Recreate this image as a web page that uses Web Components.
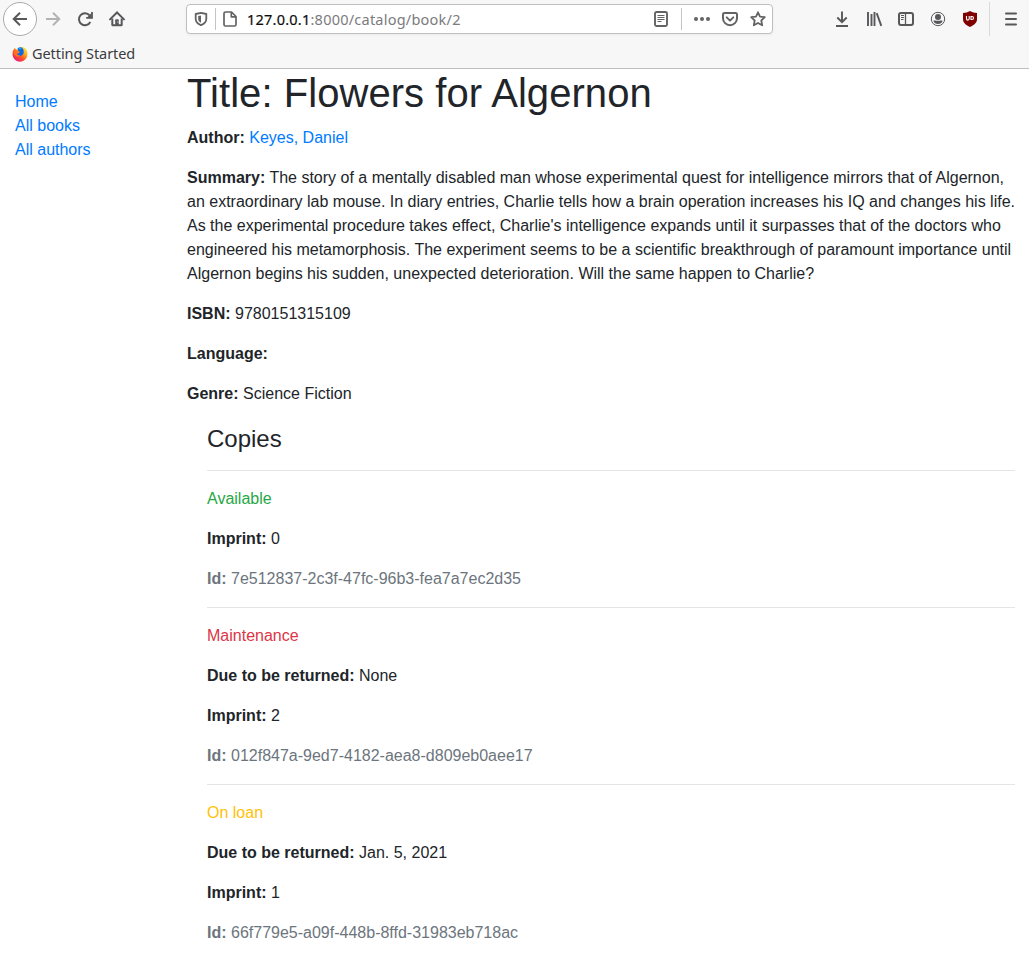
<!DOCTYPE html>
<html lang="en">
<head>
<meta charset="utf-8">
<title>Flowers for Algernon</title>
<style>
html,body{margin:0;height:100%;overflow:hidden;background:#fff}
body{font:16px/24px "Liberation Sans",Arial,sans-serif;color:#212529}
</style>
</head>
<body>
<browser-bar></browser-bar>
<library-page></library-page>
<script>
const ICONS = {
  back:'<path d="M15 8H2M8 1.7 1.7 8 8 14.3"/>',
  forward:'<path d="M1 8h13M8 1.7 14.3 8 8 14.3"/>',
  reload:'<path d="M13.3 11A6 6 0 1 1 12.6 4.4"/><path d="M15 1v5.9H9.2" stroke-width="1.8"/><path d="M14.5 2v4.5H10z" fill="currentColor" stroke="none"/>',
  home:'<path d="M1 8.4 8 1.5l7 6.9" stroke-linecap="round"/><path d="M3.3 7.5v6.2q0 .5.5.5h8.4q.5 0 .5-.5V7.5"/><path d="M6.2 14V9.2q0-.9.9-.9h1.8q.9 0 .9.9V14z" fill="currentColor" stroke="none"/><path d="M8.4 11h1" stroke="#f7f7f8" stroke-width="1"/>',
  shield:'<path d="M8 1.9 13.300 3v5c0 3.200-2.300 5-5.300 6.200C5 13 2.700 11.200 2.700 8V3z" stroke-width="1.800" stroke-linejoin="round"/><path d="M8 4.500 5.200 5v3c0 1.900 1 2.900 2.800 3.800z" fill="currentColor" stroke="none"/>',
  page:'<path d="M9.500 1H3.500Q2 1 2 2.500v11Q2 15 3.500 15h9q1.500 0 1.500-1.500V5.500zM9.300 1.500v4.300h4.300" stroke-width="1.700" stroke-linejoin="round"/>',
  reader:'<rect x="2" y="1" width="12" height="14" rx="1.500" stroke-width="1.900"/><path d="M4.500 4.500h7M4.500 6.500h7M4.500 8.500h7M4.500 10.500h4" stroke-width="1"/>',
  dots:'<g fill="currentColor" stroke="none"><circle cx="2" cy="8" r="2"/><circle cx="8" cy="8" r="2"/><circle cx="14" cy="8" r="2"/></g>',
  pocket:'<path d="M2.500 2h11q1.500 0 1.500 1.500v3.700a7 7 0 0 1-14 0V3.500Q1 2 2.500 2z"/><path d="m4.700 6.400 3.300 3.200 3.300-3.200" stroke-linecap="round" stroke-linejoin="round"/>',
  star:'<path d="m8 1.300 2 4.300 4.800.6-3.500 3.300.9 4.800L8 12l-4.200 2.300.9-4.800L1.200 6.200 6 5.600z" stroke-width="1.800" stroke-linejoin="round"/>',
  download:'<path d="M8 .5V11M3.300 6.500 8 11.200l4.700-4.700M2 15h12" stroke-linecap="butt" stroke-width="1.900"/>',
  library:'<path d="M2 1v14M5.500 3v12M8.500 1v14" stroke-width="1.900"/><path d="m10.700 2.200 4.600 12.600" stroke-width="1.900"/>',
  sidebar:'<rect x="1" y="2" width="14" height="12" rx="2"/><path d="M7.500 2v12" stroke-width="1.300"/><path d="M3 4.500h3M3 6.500h3M3 8.500h2.500" stroke-width="1"/>',
  account:'<circle cx="8" cy="8" r="6.700" stroke-width="1"/><g fill="currentColor" stroke="none"><circle cx="8" cy="6" r="3"/><path d="M3.300 9.800c1.500-.7 2.500 0 4.700 0s3.200-.7 4.700 0a5 5 0 0 1-9.400 0z"/></g>',
  ublock:'<path d="M8 0q3 2 7 2v6c0 4-3 6-7 8-4-2-7-4-7-8V2q4 0 7-2z" fill="#800000" stroke="none"/><path d="M4.500 5v2.800q0 1.300 1.300 1.300T7.200 7.800V5M9 5.500v3h1a1.500 1.500 0 0 0 0-3z" stroke="#fff" stroke-width="1.100"/>',
  menu:'<path d="M3 2.500h10M3 8h10M3 13.500h10" stroke-linecap="round"/>',
  firefox:'<defs><linearGradient id="flame" x1="1" y1="0" x2=".2" y2="1"><stop stop-color="#fff44f"/><stop offset=".35" stop-color="#ffb219"/><stop offset=".65" stop-color="#ff4c2b"/><stop offset="1" stop-color="#e31587"/></linearGradient></defs><g stroke="none"><path d="M2.500 2 5 4Q7 .6 10.500 1q4.900 1.700 5 7a7.500 7.500 0 0 1-15 .5Q.4 4.500 2.500 2z" fill="url(#flame)"/><path d="M5.500 2.200Q8 .8 10.200 1.700q2.300 2.400 1.500 5.400-1.200 3.500-4.200 2.900-2.400-.6-2.300-2.900l1.500.1 1.200-1.100-1.600-1.300z" fill="#0a67e8"/><path d="M6 2.500q2-1.300 3.700-.6L8.300 3.400z" fill="#15b8ef"/><path d="M2.200 4.500 4.500 5.700l2.500.5-.9 1.200-1.600.3q1.200 2.300 3.800 1.400-1 2.200-3.700 1.500Q1.200 8.800 2.200 4.500z" fill="#ff7418"/></g>'
};

class BrowserIcon extends HTMLElement {
  connectedCallback() {
    const root = this.attachShadow({mode:'open'});
    root.innerHTML = `<style>:host{display:block;flex:none;width:16px;height:16px;color:#58585a}svg{display:block;width:100%;height:100%;overflow:visible}</style>
      <svg viewBox="0 0 16 16" fill="none" stroke="currentColor" stroke-width="2">${ICONS[this.getAttribute('name')]}</svg>`;
  }
}
customElements.define('browser-icon', BrowserIcon);

class AddressBar extends HTMLElement {
  constructor() {
    super();
    this.attachShadow({mode:'open'}).innerHTML = `<style>
      :host{display:flex;align-items:center;box-sizing:border-box;width:587px;height:30px;padding:0 6px;background:#fff;border:1px solid #bfbfc1;border-radius:4px;box-shadow:0 1px 3px #0000000d}
      i{width:1px;height:22px;background:#c4c4c6;flex:none}
      .url{margin-left:9px;font:14.5px/20px "Noto Sans",sans-serif;letter-spacing:.23px;color:#7b7b7d;white-space:nowrap;flex:1}
      b{font-weight:400;color:#0c0c0d;-webkit-text-stroke:.2px #0c0c0d}
      browser-icon{color:#636365}
    </style>
    <browser-icon name="shield"></browser-icon><i style="margin:0 6px 0 6px"></i><browser-icon name="page"></browser-icon>
    <span class="url"><b>127.0.0.1</b>:8000/catalog/book/2</span>
    <browser-icon name="reader"></browser-icon><i style="margin:0 12px"></i>
    <browser-icon name="dots" style="margin-right:12px"></browser-icon><browser-icon name="pocket" style="margin-right:12px"></browser-icon><browser-icon name="star"></browser-icon>`;
  }
}
customElements.define('address-bar', AddressBar);

class BrowserBar extends HTMLElement {
  constructor() {
    super();
    this.attachShadow({mode:'open'}).innerHTML = `<style>
      :host{display:block;box-sizing:border-box;height:69px;background:#f7f7f8;border-bottom:1px solid #bebebf}
      .nav{display:flex;align-items:center;height:38px;padding:0 10px 0 3px}
      .back{box-sizing:border-box;width:34px;height:34px;border:1px solid #aaaaab;border-radius:50%;background:#fff;display:grid;place-items:center;margin-right:8px}
      .tools{display:flex;align-items:center;gap:16px;margin-left:61px}
      .tools i{width:1px;height:34px;background:#d9d9db;margin:0 -3px 0 -5px}
      .bookmarks{display:flex;align-items:center;height:30px;padding-left:12px;gap:4px}
      .bookmarks browser-icon{margin-top:2px}
      .bookmarks span{font:14.5px/20px "Noto Sans",sans-serif;letter-spacing:-.07px;color:#3c3c3e}
    </style>
    <div class="nav">
      <div class="back"><browser-icon name="back"></browser-icon></div>
      <browser-icon name="forward" style="color:#b3b3b4;margin-right:16px"></browser-icon>
      <browser-icon name="reload" style="margin-right:16px"></browser-icon>
      <browser-icon name="home" style="margin-right:61px"></browser-icon>
      <address-bar></address-bar>
      <div class="tools"><browser-icon name="download"></browser-icon><browser-icon name="library"></browser-icon><browser-icon name="sidebar"></browser-icon><browser-icon name="account"></browser-icon><browser-icon name="ublock"></browser-icon><i></i><browser-icon name="menu"></browser-icon></div>
    </div>
    <div class="bookmarks"><browser-icon name="firefox"></browser-icon><span>Getting Started</span></div>`;
  }
}
customElements.define('browser-bar', BrowserBar);

class DetailLine extends HTMLElement {
  constructor() {
    super();
    this.attachShadow({mode:'open'}).innerHTML = `<style>
      :host{display:block;margin-bottom:16px}
      :host([muted]){color:#6c757d}
      strong{font-weight:700}
    </style><strong></strong> <slot></slot>`;
  }
  connectedCallback() {
    this.shadowRoot.querySelector('strong').textContent = this.getAttribute('label') + ':';
  }
}
customElements.define('detail-line', DetailLine);

class BookCopy extends HTMLElement {
  connectedCallback() {
    const due = this.getAttribute('due');
    this.attachShadow({mode:'open'}).innerHTML = `<style>
      :host{display:block}
      hr{margin:16px 0;border:0;border-top:1px solid rgba(0,0,0,.1)}
      p{margin:0 0 16px}
      .available{color:#28a745}.maintenance{color:#dc3545}.loan{color:#ffc107}
    </style><hr><p class="${this.getAttribute('kind')}">${this.getAttribute('status')}</p>
    ${due ? `<detail-line label="Due to be returned">${due}</detail-line>` : ''}
    <detail-line label="Imprint">${this.getAttribute('imprint')}</detail-line>
    <detail-line label="Id" muted>${this.getAttribute('uid')}</detail-line>`;
  }
}
customElements.define('book-copy', BookCopy);

class SideNav extends HTMLElement {
  constructor() {
    super();
    this.attachShadow({mode:'open'}).innerHTML = `<style>
      :host{display:block;padding:21px 15px 0}
      ul{list-style:none;margin:0;padding:0}
      a{color:#007bff;text-decoration:none}
    </style><ul><li><a href="#">Home</a></li><li><a href="#">All books</a></li><li><a href="#">All authors</a></li></ul>`;
  }
}
customElements.define('side-nav', SideNav);

class LibraryPage extends HTMLElement {
  constructor() {
    super();
    this.attachShadow({mode:'open'}).innerHTML = `<style>
      :host{display:grid;grid-template-columns:172px minmax(0,1fr)}
      main{padding:0 14px 0 15px}
      h1{font-size:40px;line-height:48px;margin:0 0 9px;letter-spacing:.06px}
      h4{font-size:24px;line-height:1.2;margin:0}
      h1,h4{font-weight:400}
      a{color:#007bff;text-decoration:none}
      section{margin:19px 0 0 20px}
    </style>
    <side-nav></side-nav>
    <main>
      <h1>Title: Flowers for Algernon</h1>
      <detail-line label="Author"><a href="#">Keyes, Daniel</a></detail-line>
      <detail-line label="Summary">The story of a mentally disabled man whose experimental quest for intelligence mirrors that of Algernon, an extraordinary lab mouse. In diary entries, Charlie tells how a brain operation increases his IQ and changes his life. As the experimental procedure takes effect, Charlie's intelligence expands until it surpasses that of the doctors who engineered his metamorphosis. The experiment seems to be a scientific breakthrough of paramount importance until Algernon begins his sudden, unexpected deterioration. Will the same happen to Charlie?</detail-line>
      <detail-line label="ISBN">9780151315109</detail-line>
      <detail-line label="Language"></detail-line>
      <detail-line label="Genre">Science Fiction</detail-line>
      <section>
        <h4>Copies</h4>
        <book-copy kind="available" status="Available" imprint="0" uid="7e512837-2c3f-47fc-96b3-fea7a7ec2d35"></book-copy>
        <book-copy kind="maintenance" status="Maintenance" due="None" imprint="2" uid="012f847a-9ed7-4182-aea8-d809eb0aee17"></book-copy>
        <book-copy kind="loan" status="On loan" due="Jan. 5, 2021" imprint="1" uid="66f779e5-a09f-448b-8ffd-31983eb718ac"></book-copy>
      </section>
    </main>`;
  }
}
customElements.define('library-page', LibraryPage);
</script>
</body>
</html>
